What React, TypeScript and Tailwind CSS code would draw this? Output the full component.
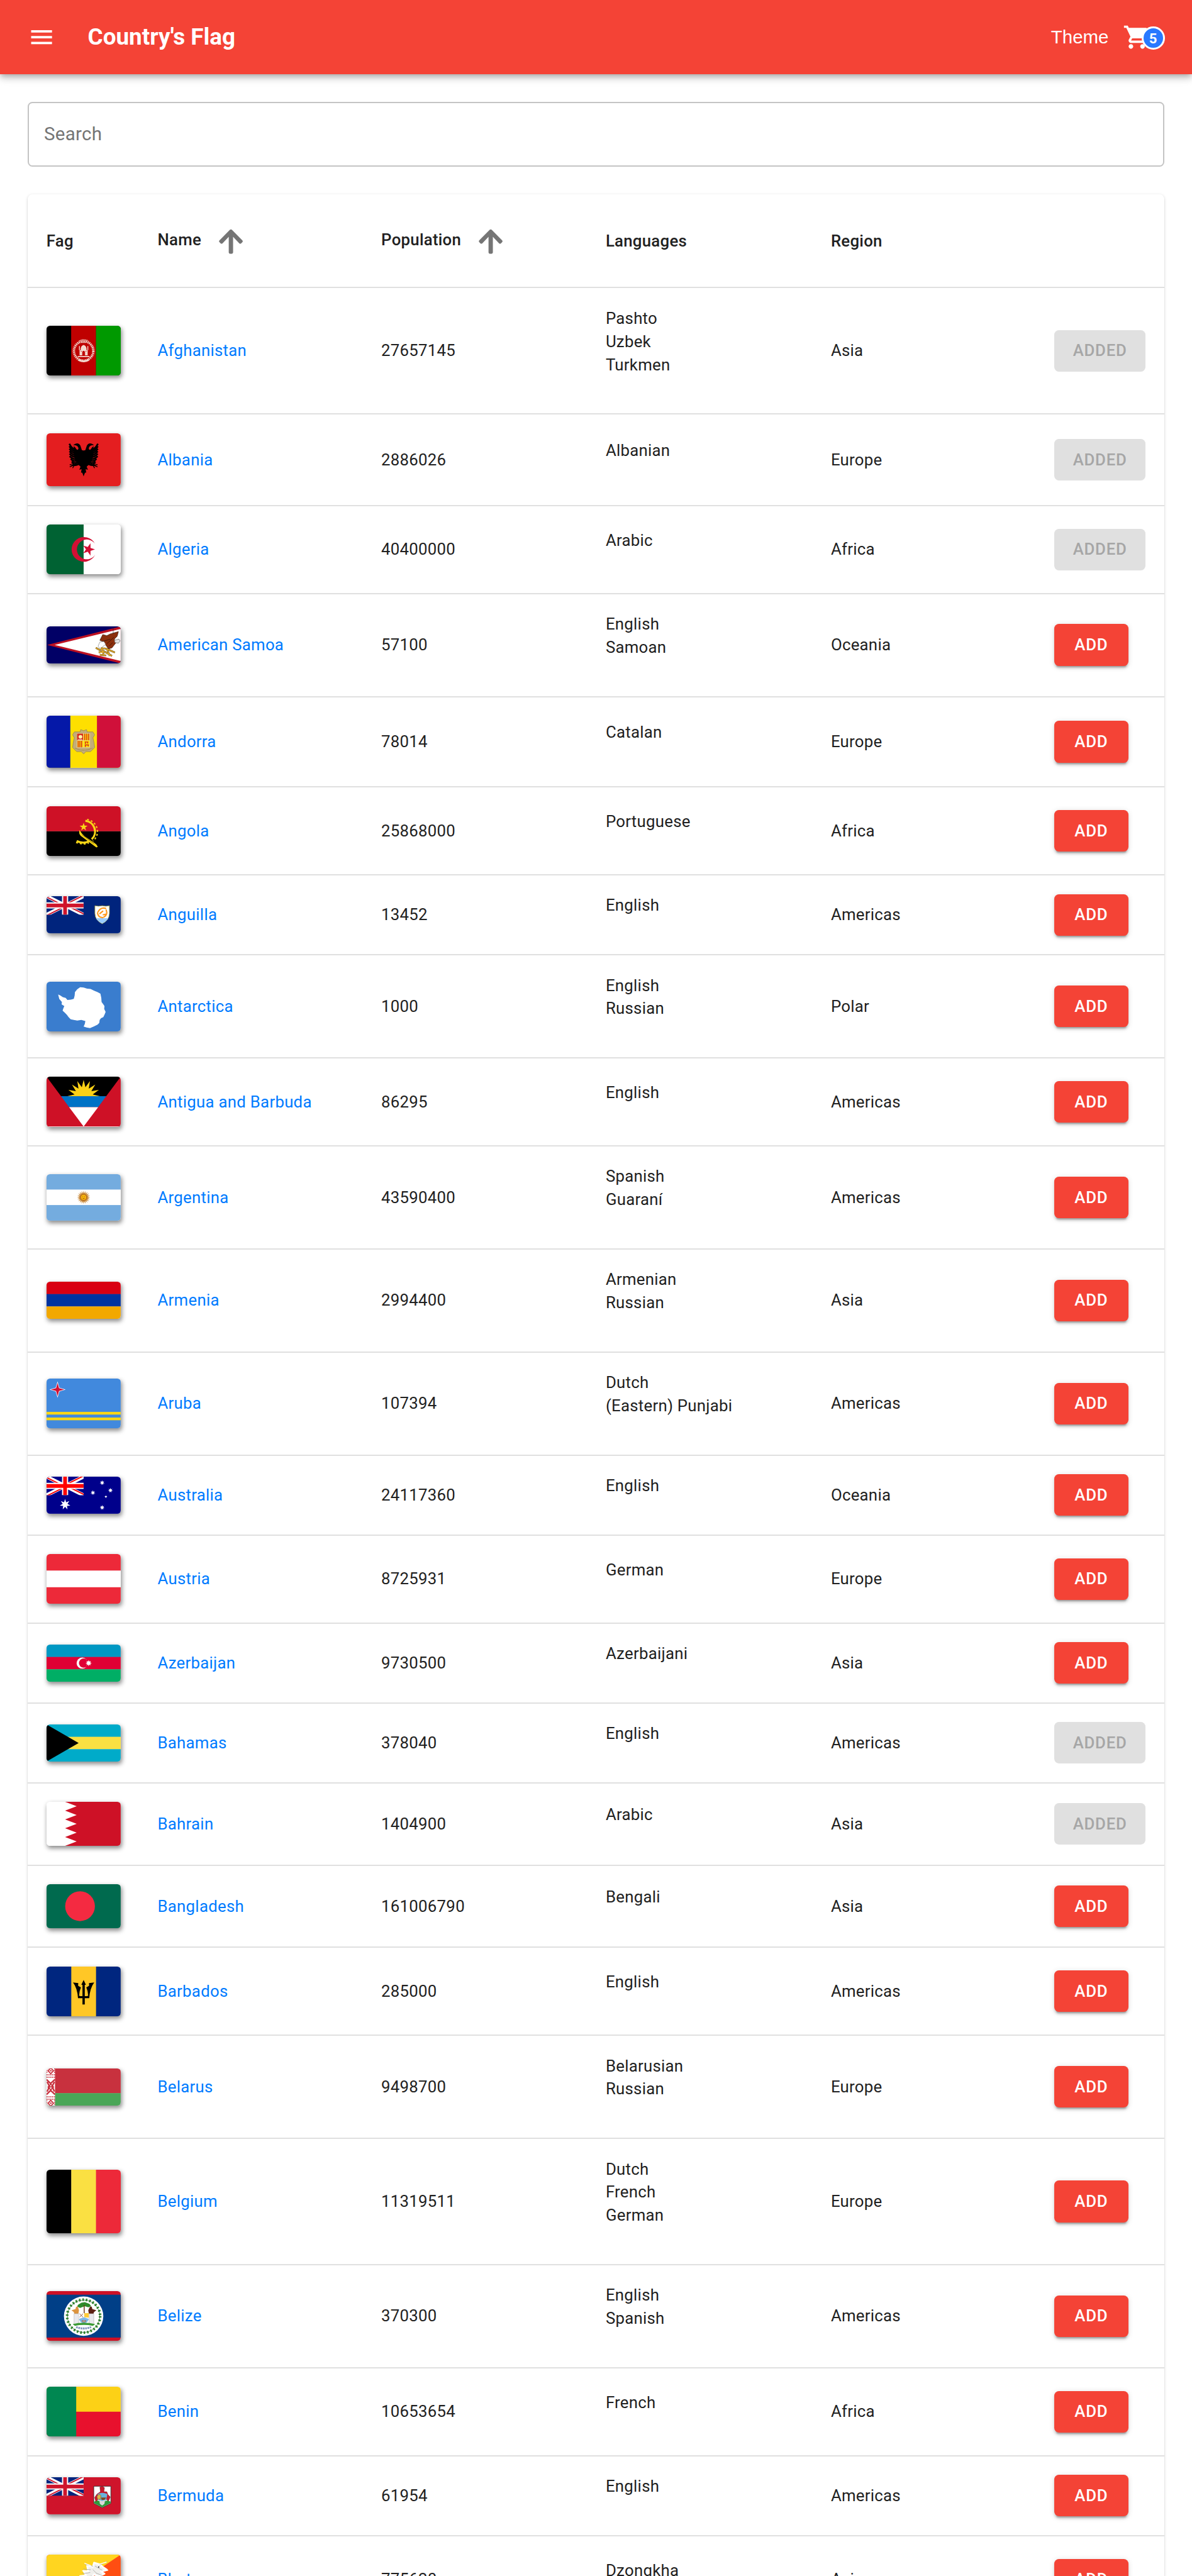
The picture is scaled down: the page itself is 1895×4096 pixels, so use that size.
import type { ReactNode } from "react";
import { FaArrowUp } from "react-icons/fa";
import { MdMenu, MdShoppingCart } from "react-icons/md";

/** Points of a regular star, first tip at `rot` degrees (0 = right, -90 = up). */
function star(cx: number, cy: number, n: number, outer: number, inner: number, rot = -90): string {
  return Array.from({ length: n * 2 }, (_, i) => {
    const r = i % 2 === 0 ? outer : inner;
    const a = ((rot + (i * 180) / n) * Math.PI) / 180;
    return `${(cx + r * Math.cos(a)).toFixed(2)},${(cy + r * Math.sin(a)).toFixed(2)}`;
  }).join(" ");
}

function Horizontal({ h, colors }: { h: number; colors: string[] }) {
  return (
    <>
      {colors.map((c, i) => (
        <rect key={i} y={(h / colors.length) * i} width="128" height={h / colors.length + 0.3} fill={c} />
      ))}
    </>
  );
}

function UnionJack({ red, blue }: { red: string; blue: string }) {
  return (
    <svg width="64" height="32" viewBox="0 0 64 32">
      <rect width="64" height="32" fill={blue} />
      <path d="M0 0L64 32M64 0L0 32" stroke="#fff" strokeWidth="6.4" />
      <path d="M-1 .9L30 16.4M65 31.1L34 15.6M63.5 -1.2L32 14.6M.5 33.2L32 17.4" stroke={red} strokeWidth="2.1" />
      <path d="M32 0V32M0 16H64" stroke="#fff" strokeWidth="10.6" />
      <path d="M32 0V32M0 16H64" stroke={red} strokeWidth="6.4" />
    </svg>
  );
}

const EAGLE_WING = (
  <g>
    <path d="M64.200 30L61 29L58.500 21.500C57 17.500 53 16.500 50 18L46 20L51 21C54 22 55.500 25 55 27C54 29.500 51.500 28.500 50 25L47 22L47 36L49 46L53 52L58 57L64.200 61Z" />
    {[0, 1, 2, 3, 4, 5, 6, 7, 8].map((i) => (
      <path
        key={i}
        d={`M${51 + i * 0.6} ${29 + i * 3}Q${44 + i * 0.4} ${27 + i * 3.8} ${39.3 + i * 0.1 + Math.max(0, i - 5) * 2} ${18 + i * 4.3}`}
        fill="none"
        stroke="#000"
        strokeWidth="2.900"
      />
    ))}
    <path d="M54 51L47 55L40 54M47 55L40 58M48 55L45 60M48 54L43 51" fill="none" stroke="#000" strokeWidth="1.500" />
    <path d="M64.200 52L59 57L56.500 63L60.500 62L59.500 68L61.500 68L64.200 74.500Z" />
  </g>
);

type Art = { h: number; art: ReactNode };

const FLAGS: Record<string, Art> = {
  Afghanistan: {
    h: 86,
    art: (
      <>
        <rect width="128" height="86" fill="#000" />
        <rect x="42.500" width="43" height="86" fill="#bf0000" />
        <rect x="85.300" width="43" height="86" fill="#009900" />
        <g fill="none" stroke="#f3d9cf">
          <circle cx="64" cy="43.500" r="16.500" strokeWidth="3.600" strokeDasharray="2 1" />
          <circle cx="64" cy="43.500" r="18.800" strokeWidth="0.800" strokeDasharray="1.500 1.500" />
          <path d="M55 59Q64 64 73 59" strokeWidth="3" />
          <path d="M56 26Q64 22 72 26M60 29H68" strokeWidth="1.200" strokeDasharray="2 .7" />
        </g>
        <g fill="#f3d9cf">
          <path d="M57 51V42H59V39Q60 34 64 33Q68 34 69 39V42H71V51Z" />
          <path d="M54 52H74V54H54ZM56 35H57.500V42H56ZM70.500 35H72V42H70.500Z" />
        </g>
        <path d="M62 51V45Q64 42 66 45V51ZM59 44H61M67 44H69" fill="#bf0000" stroke="#bf0000" strokeWidth=".8" />
      </>
    ),
  },
  Albania: {
    h: 91.4,
    art: (
      <>
        <rect width="128" height="92" fill="#e41e20" />
        {EAGLE_WING}
        <g transform="translate(128 0) scale(-1 1)">{EAGLE_WING}</g>
      </>
    ),
  },
  Algeria: {
    h: 86,
    art: (
      <>
        <rect width="128" height="86" fill="#fff" />
        <rect width="64" height="86" fill="#006233" />
        <path d="M84 34A21.400 21.400 0 1 0 84 52A17.100 17.100 0 1 1 84 34Z" fill="#d21034" />
        <polygon points={star(72.4, 43, 5, 11.2, 4.3, 0)} fill="#d21034" />
      </>
    ),
  },
  "American Samoa": {
    h: 64,
    art: (
      <>
        <rect width="128" height="64" fill="#010066" />
        <path d="M1 32L124 1L128 0V64L124 63Z" fill="#bd1021" />
        <path d="M14 32L128 4.300V59.700Z" fill="#fff" />
        <path d="M92 24L97 14L104 16L110 13L124 9L122 17L117 22L120 28L113 37L107 39L102 32L97 26Z" fill="#8b2f0c" stroke="#2e1206" strokeWidth=".7" />
        <path d="M97 26L110 22M104 30L116 19M108 34L114 28" stroke="#2e1206" strokeWidth=".8" fill="none" />
        <path d="M117 24L125 22L127 25L124 29L118 28Z" fill="#e4e4e4" stroke="#555" strokeWidth=".7" />
        <path d="M89 34L92 27L99 26L102 31L97 35L93 40Z" fill="#fff" stroke="#777" strokeWidth=".7" />
        <path d="M85 37L92 41L99 38L104 39L118 45M90 45L99 43L113 51M95 36L99 50M104 38L109 51M92 49L103 50" fill="none" stroke="#5b4310" strokeWidth="3" />
        <path d="M85 37L92 41L99 38L104 39L118 45M90 45L99 43L113 51M95 36L99 50M104 38L109 51M92 49L103 50" fill="none" stroke="#e0aa2c" strokeWidth="1.800" />
        <path d="M115 3V13" stroke="#222" strokeWidth=".6" />
      </>
    ),
  },
  Andorra: {
    h: 90,
    art: (
      <>
        <rect width="128" height="90" fill="#fedf00" />
        <rect width="41" height="90" fill="#0518a8" />
        <rect x="87" width="41" height="90" fill="#d0103a" />
        <path d="M59 24L64 26L69 24L70 28H80L83 33L80 38L82 47L83 55L76 62L68 62L64 66L60 62L52 62L45 55L46 47L48 38L45 33L48 28H58Z" fill="#c3ad78" stroke="#8f7d4c" strokeWidth=".8" />
        <path d="M49 56Q64 63 79 56" fill="none" stroke="#7c6a3c" strokeWidth="1" strokeDasharray="1.500 1" />
        <rect x="52.700" y="31" width="22" height="23.500" fill="#fedf00" stroke="#f3e6b8" strokeWidth=".6" />
        <rect x="52.700" y="31" width="10.700" height="11.500" fill="#d52b1e" />
        <circle cx="58.500" cy="36.500" r="3.200" fill="#fff3a8" />
        <path d="M54 41.500H62" stroke="#fff" strokeWidth="1.200" />
        <path d="M66 31V42.500M69.400 31V42.500M72.800 31V42.500M54.500 43.500V54.500M57.500 43.500V54.500M60.500 43.500V54.500" stroke="#d52b1e" strokeWidth="1.600" />
        <path d="M66 45.500H72M67 45V49M71 45V48M66 50.500H73M67 51V54M72 51V53" stroke="#d52b1e" strokeWidth="1.500" />
        <path d="M52.700 42.800H74.700M63.700 31V54.500" stroke="#e9dca8" strokeWidth=".7" />
      </>
    ),
  },
  Angola: {
    h: 86,
    art: (
      <>
        <rect width="128" height="43.300" fill="#ce1126" />
        <rect y="43.300" width="128" height="43" fill="#000" />
        <g fill="none" stroke="#f9d616">
          <path d="M67 25.200A18.500 18.500 0 0 1 78 57M52 60Q62 65 73 61" strokeWidth="3.600" />
          <path d="M70 22.800A21 21 0 0 1 80 60M51 62.500Q62 67 73 63.500" strokeWidth="2.200" strokeDasharray="3.200 3.600" />
        </g>
        <path d="M57 41Q55 47 59 51L86 71L88.500 70Q87 66 83 63.500L66 52Q60 47 57 41Z" fill="#f9d616" />
        <path d="M61 49L82 65" stroke="#6b5900" strokeWidth=".8" />
        <polygon points={star(64, 35.8, 5, 7.3, 2.8)} fill="#f9d616" />
      </>
    ),
  },
  Anguilla: {
    h: 64,
    art: (
      <>
        <rect width="128" height="64" fill="#00247d" />
        <UnionJack red="#cf142b" blue="#00247d" />
        <path d="M83.500 16.500Q90 18 96 16.500Q102 18 108.500 16.500V30Q108 42 96 47.500Q84 42 83.500 30Z" fill="#fff" stroke="#a5a13a" strokeWidth=".9" />
        <path d="M85.500 38H106.500Q103 44 96 47Q89 44 85.500 38Z" fill="#9cf" />
        <path d="M89 27Q93 19 102 21M103 24Q106 32 99 36M97 37Q89 37 88 29M92 30L97 26M98 32L103 31" fill="none" stroke="#ff9a1f" strokeWidth="2.400" strokeLinecap="round" />
      </>
    ),
  },
  Antarctica: {
    h: 86,
    art: (
      <>
        <rect width="128" height="86" fill="#3a7dce" />
        <path d="M20 22L24 24L28 26.500L33 28L36 31.500L42 31L47 29.500L48.500 24L49 18L53 13L58 9.500L64 10L70 12L76 12.500L82 15.500L88 18L93 20.500L94.500 28L95 35L98 39L100 42L99.500 47L102 52L100 57L98 61L94 63L91.700 66L91 71L88 74L82 77L75 80L69 79L64 77.500L66 73L67 68L60 66L53 67L47 66L41.700 65L38 61L35 57L31 53L27.700 50L29 46L30.700 42L26 39L26.500 35L22 30Z" fill="#fff" />
      </>
    ),
  },
  "Antigua and Barbuda": {
    h: 86,
    art: (
      <>
        <rect width="128" height="86" fill="#ce1126" />
        <path d="M0 0H128L103 33.800H25Z" fill="#000" />
        <clipPath id="sunHorizon">
          <rect width="128" height="33.800" />
        </clipPath>
        <polygon points={star(64, 33.8, 16, 28.5, 16)} fill="#fcd116" clipPath="url(#sunHorizon)" />
        <path d="M25 33.800H103L89 52.700H39Z" fill="#0072c6" />
        <path d="M39 52.700H89L64 86Z" fill="#fff" />
      </>
    ),
  },
  Argentina: {
    h: 80,
    art: (
      <>
        <Horizontal h={80} colors={["#74acdf", "#fff", "#74acdf"]} />
        <polygon points={star(64, 40, 20, 11.5, 7)} fill="#c98a3c" />
        <circle cx="64" cy="40" r="5.200" fill="#f6b40e" stroke="#9a4c10" strokeWidth=".8" />
        <path d="M62 39H63M65 39H66M62.500 42H65.500" stroke="#85340a" strokeWidth=".8" />
      </>
    ),
  },
  Armenia: { h: 64, art: <Horizontal h={64} colors={["#d90012", "#0033a0", "#f2a800"]} /> },
  Aruba: {
    h: 86,
    art: (
      <>
        <rect width="128" height="86" fill="#4189dd" />
        <rect y="57.500" width="128" height="4.700" fill="#f9d616" />
        <rect y="67.300" width="128" height="4.700" fill="#f9d616" />
        <polygon points={star(19, 19, 4, 14, 4.6)} fill="#fff" />
        <polygon points={star(19, 19, 4, 11.5, 3.6)} fill="#d21034" />
      </>
    ),
  },
  Australia: {
    h: 64,
    art: (
      <>
        <rect width="128" height="64" fill="#00008b" />
        <UnionJack red="#f00" blue="#00008b" />
        <g fill="#fff">
          <polygon points={star(32, 48, 7, 9.4, 4.2)} />
          <polygon points={star(96, 10.5, 7, 4.3, 1.9)} />
          <polygon points={star(110.3, 23.6, 7, 4.3, 1.9)} />
          <polygon points={star(80, 27.7, 7, 4.3, 1.9)} />
          <polygon points={star(96, 53.3, 7, 4.3, 1.9)} />
          <polygon points={star(102.4, 34.6, 5, 2.6, 1.1)} />
        </g>
      </>
    ),
  },
  Austria: { h: 86, art: <Horizontal h={86} colors={["#ed2939", "#fff", "#ed2939"]} /> },
  Azerbaijan: {
    h: 64,
    art: (
      <>
        <Horizontal h={64} colors={["#0098c3", "#e00034", "#00ae65"]} />
        <circle cx="61.500" cy="32" r="9.600" fill="#fff" />
        <circle cx="64" cy="32" r="8" fill="#e00034" />
        <polygon points={star(72.7, 32, 8, 5.4, 2.8)} fill="#fff" />
      </>
    ),
  },
  Bahamas: {
    h: 64,
    art: (
      <>
        <Horizontal h={64} colors={["#00abc9", "#fae042", "#00abc9"]} />
        <path d="M0 0L55.400 32L0 64Z" fill="#000" />
      </>
    ),
  },
  Bahrain: {
    h: 76,
    art: (
      <>
        <rect width="128" height="76" fill="#fff" />
        <path d="M128 0H32L52 7.600L32 15.200L52 22.800L32 30.400L52 38L32 45.600L52 53.200L32 60.800L52 68.400L32 76H128Z" fill="#ce1126" />
      </>
    ),
  },
  Bangladesh: {
    h: 76,
    art: (
      <>
        <rect width="128" height="76" fill="#006a4e" />
        <circle cx="57.800" cy="38" r="25.700" fill="#f42a41" />
      </>
    ),
  },
  Barbados: {
    h: 86,
    art: (
      <>
        <rect width="128" height="86" fill="#00267f" />
        <rect x="42.700" width="42.700" height="86" fill="#ffc726" />
        <path
          d="M64 23L60 31.500H62V51H57.500Q58.500 41 61 35L54.500 33L54.800 28.500L45.700 27.500Q53 37 54.300 54.500H62V65.500H66V54.500H73.700Q75 37 82.300 27.500L73.200 28.500L73.500 33L67 35Q69.500 41 70.500 51H66V31.500H68Z"
          fill="#000"
        />
        <path d="M55.500 32.500L60.500 35.500Q57.500 42 57 50.500M72.500 32.500L67.500 35.500Q70.500 42 71 50.500" fill="none" stroke="#ffc726" strokeWidth="1.800" />
      </>
    ),
  },
  Belarus: {
    h: 64,
    art: (
      <>
        <rect width="128" height="43" fill="#c8313e" />
        <rect y="42.600" width="128" height="22" fill="#4aa657" />
        <rect width="14.600" height="64" fill="#fff" />
        <g fill="none" stroke="#c8313e" strokeWidth="1.900">
          {[4, 32, 60].map((y) => (
            <path key={y} d={`M7.300 ${y - 5}L12 ${y}L7.300 ${y + 5}L2.600 ${y}ZM5.500 ${y}H9`} />
          ))}
          <path d="M0 19L7 26L14.600 19M0 45L7 38L14.600 45M1 23L5 31L1 40M13.600 23L9.600 31L13.600 40" strokeWidth="2.600" />
          <path d="M0 11H14.600M0 15H14.600M0 49H14.600M0 53H14.600" strokeDasharray="2 1.200" />
          <path d="M.5 0V9M14 0V9M.5 55V64M14 55V64" strokeDasharray="1.500 1.500" />
        </g>
      </>
    ),
  },
  Belgium: {
    h: 110,
    art: (
      <>
        <rect width="43" height="110" fill="#000" />
        <rect x="42.700" width="43" height="110" fill="#fae042" />
        <rect x="85.300" width="43" height="110" fill="#ed2939" />
      </>
    ),
  },
  Belize: {
    h: 86,
    art: (
      <>
        <rect width="128" height="86" fill="#ce1126" />
        <rect y="6.200" width="128" height="74" fill="#003f87" />
        <circle cx="64" cy="43.300" r="34" fill="#fff" />
        <circle cx="64" cy="43.300" r="28.500" fill="none" stroke="#2f8a2c" strokeWidth="4.600" strokeDasharray="2.600 3.370" />
        <circle cx="64" cy="43.300" r="28" fill="none" stroke="#1d5c1f" strokeWidth=".8" />
        <path d="M54 24L60 20L66 19L74 22L77 26L72 28L66 26L58 29L53 27Z" fill="#2e8b2a" />
        <path d="M65 24V38" stroke="#6b3a12" strokeWidth="1.600" />
        <path d="M43 33L50 31L51 27H54L56 33L55 39H48L47 36Z" fill="#dc9440" />
        <path d="M86 33L79 31L78 27H75L72 33L73 39H81L82 36Z" fill="#5c2014" />
        <path d="M47.500 39H55.500V57H47.500ZM73.500 39H81.500V57H73.500Z" fill="#e9e9ee" stroke="#aaa" strokeWidth=".6" />
        <path d="M56 38H73V47Q71 54 64.500 56Q58 54 56 47Z" fill="#fff" />
        <path d="M65 38H73V46L65 45Z" fill="#ffcb3b" />
        <path d="M56 48L64.500 45L73 48Q71 55 64.500 56Q58 55 56 48Z" fill="#7fb8e8" />
        <path d="M57 45L63 39M57 39L63 45M61 51H68L67 53H62Z" stroke="#8a4a2a" strokeWidth="1" fill="#fff" />
        <path d="M45 57Q64 52 84 57L80 60Q64 57 49 60Z" fill="#3b9b35" />
        <path d="M51 62Q64 67 77 62" fill="none" stroke="#8195bd" strokeWidth="3.400" strokeDasharray="3 1" />
      </>
    ),
  },
  Benin: {
    h: 86,
    art: (
      <>
        <rect width="128" height="43.500" fill="#fcd116" />
        <rect y="43.200" width="128" height="43" fill="#e8112d" />
        <rect width="51.200" height="86" fill="#008751" />
      </>
    ),
  },
  Bermuda: {
    h: 64,
    art: (
      <>
        <rect width="128" height="64" fill="#cf142b" />
        <UnionJack red="#cf142b" blue="#00247d" />
        <path d="M81.500 15.500H111V45L96 52.500L81.500 45Z" fill="#fff" stroke="#222" strokeWidth=".9" />
        <path d="M82 42L88 40L96 43L105 40L110.500 42V44.600L96 52L82 44.600Z" fill="#2f9a3a" />
        <path d="M92 17L96 15.500L100 18L99 25H104L106 30L110 34L107 41L103 38H89L85 42L83 35L87 29L93 25Z" fill="#c9182b" stroke="#5c0a12" strokeWidth=".5" />
        <path d="M88 29Q96 25 105 29L103 39Q96 47 90 39Z" fill="#69b3dc" />
        <path d="M87 33Q91 27 94 32L93 38H88Z" fill="#d7b84a" stroke="#6d5915" strokeWidth=".6" />
        <path d="M94 35H103L100 39H95Z" fill="#7b4a22" />
        <path d="M91 39L96 41L101 39L100 46L96 49L92 46Z" fill="#d9d9d9" />
      </>
    ),
  },
  Bhutan: {
    h: 86,
    art: (
      <>
        <rect width="128" height="86" fill="#ff4e12" />
        <path d="M0 0H128L0 86Z" fill="#ffd520" />
        <g fill="none" strokeLinecap="round" strokeLinejoin="round">
          <path d="M54 48L60 42L58 37L68 36L64 28L72 29L70 19L80 21L82 14L92 17L98 22L104 26L94 29L100 33L90 38L82 34L76 42L66 50" fill="#f1f0ec" stroke="#fff" strokeWidth="3" />
          <path d="M67 17L80 20M64 25L76 26M62 33L75 31M60 39L78 37M92 18L104 12M84 20L96 27M86 32L96 36M80 26L86 32" stroke="#a9a8a4" strokeWidth=".9" />
          <path d="M90 17L103 13M66 15L76 19M62 28L70 30M94 30L106 27" stroke="#fff" strokeWidth="1.500" />
        </g>
        <circle cx="90" cy="21.500" r="1.100" fill="#222" />
      </>
    ),
  },
};

type Country = {
  name: string;
  population: string;
  languages: string[];
  region: string;
  added?: boolean;
  /** Row height in layout units. */
  h: number;
};

const COUNTRIES: Country[] = [
  { name: "Afghanistan", population: "27657145", languages: ["Pashto", "Uzbek", "Turkmen"], region: "Asia", added: true, h: 109 },
  { name: "Albania", population: "2886026", languages: ["Albanian"], region: "Europe", added: true, h: 79 },
  { name: "Algeria", population: "40400000", languages: ["Arabic"], region: "Africa", added: true, h: 76 },
  { name: "American Samoa", population: "57100", languages: ["English", "Samoan"], region: "Oceania", h: 89 },
  { name: "Andorra", population: "78014", languages: ["Catalan"], region: "Europe", h: 78 },
  { name: "Angola", population: "25868000", languages: ["Portuguese"], region: "Africa", h: 76 },
  { name: "Anguilla", population: "13452", languages: ["English"], region: "Americas", h: 69 },
  { name: "Antarctica", population: "1000", languages: ["English", "Russian"], region: "Polar", h: 89 },
  { name: "Antigua and Barbuda", population: "86295", languages: ["English"], region: "Americas", h: 76 },
  { name: "Argentina", population: "43590400", languages: ["Spanish", "Guaraní"], region: "Americas", h: 89 },
  { name: "Armenia", population: "2994400", languages: ["Armenian", "Russian"], region: "Asia", h: 89 },
  { name: "Aruba", population: "107394", languages: ["Dutch", "(Eastern) Punjabi"], region: "Americas", h: 89 },
  { name: "Australia", population: "24117360", languages: ["English"], region: "Oceania", h: 69 },
  { name: "Austria", population: "8725931", languages: ["German"], region: "Europe", h: 76 },
  { name: "Azerbaijan", population: "9730500", languages: ["Azerbaijani"], region: "Asia", h: 69 },
  { name: "Bahamas", population: "378040", languages: ["English"], region: "Americas", added: true, h: 69 },
  { name: "Bahrain", population: "1404900", languages: ["Arabic"], region: "Asia", added: true, h: 71 },
  { name: "Bangladesh", population: "161006790", languages: ["Bengali"], region: "Asia", h: 71 },
  { name: "Barbados", population: "285000", languages: ["English"], region: "Americas", h: 76 },
  { name: "Belarus", population: "9498700", languages: ["Belarusian", "Russian"], region: "Europe", h: 89 },
  { name: "Belgium", population: "11319511", languages: ["Dutch", "French", "German"], region: "Europe", h: 109 },
  { name: "Belize", population: "370300", languages: ["English", "Spanish"], region: "Americas", h: 89 },
  { name: "Benin", population: "10653654", languages: ["French"], region: "Africa", h: 76 },
  { name: "Bermuda", population: "61954", languages: ["English"], region: "Americas", h: 69 },
  { name: "Bhutan", population: "775620", languages: ["Dzongkha"], region: "Asia", h: 76 },
];

const UNIT = 1.8416;

function Flag({ name }: { name: string }) {
  const { h, art } = FLAGS[name];
  return (
    <div className="w-[117.9px] overflow-hidden rounded-[5.500px] shadow-[1.800px_3.700px_7.4px_rgba(0,0,0,0.45)]">
      <svg className="block w-full" viewBox={`0 0 128 ${h}`} style={{ height: (h * UNIT) / 2 }} preserveAspectRatio="none">
        {art}
      </svg>
    </div>
  );
}

function CartButton({ added }: { added?: boolean }) {
  return added ? (
    <button className="h-[66.3px] w-[145.5px] rounded-[7.4px] bg-[#e0e0e0] text-[25.78px] font-medium tracking-[0.02857em] text-[#a6a6a6]">
      ADDED
    </button>
  ) : (
    <button className="h-[66.3px] w-[117.9px] rounded-[7.4px] bg-[#f44336] text-[25.78px] font-medium tracking-[0.02857em] text-white shadow-[0_5.5px_1.800px_-3.700px_rgba(0,0,0,0.2),0_3.700px_3.700px_0_rgba(0,0,0,0.14),0_1.800px_9.200px_0_rgba(0,0,0,0.12)]">
      ADD
    </button>
  );
}

function SortableHeading({ label }: { label: string }) {
  return (
    <div className="flex items-center gap-[24.6px]">
      <span className="relative -top-[2px]">{label}</span>
      <FaArrowUp className="size-[44.2px] text-[#757575]" />
    </div>
  );
}

export default function App() {
  return (
    <div className="h-[4096px] w-[1895px] overflow-hidden bg-white font-['Roboto',sans-serif] text-[#212121]">
      <header className="relative flex h-[118px] items-center bg-[#f44336] pl-[44.2px] pr-[66.3px] text-white shadow-[0_3.700px_7.4px_-1.800px_rgba(0,0,0,0.2),0_7.4px_9.200px_0_rgba(0,0,0,0.14),0_1.800px_18.400px_0_rgba(0,0,0,0.12)]">
        <MdMenu className="size-[44.2px]" />
        <h1 className="ml-[51.2px] text-[36.83px] font-bold">Country's Flag</h1>
        <span className="ml-auto font-['Liberation_Sans',Arial,sans-serif] text-[29.47px]">Theme</span>
        <div className="relative ml-[22px]">
          <MdShoppingCart className="size-[44.2px]" />
          <span className="absolute left-[30.3px] top-[5.500px] flex size-[36.8px] items-center justify-center rounded-full border-[3.700px] border-white bg-[#2979ff] text-[22.1px] font-bold leading-none">
            5
          </span>
        </div>
      </header>

      <main className="px-[44.2px] pt-[44px]">
        <div className="flex h-[103.1px] items-center rounded-[7.4px] border-2 border-[#c4c4c4] px-[23.8px] text-[29.47px] tracking-[0.00938em] text-[#757575]">
          Search
        </div>

        <div className="mt-[44.2px] rounded-[7.4px] bg-white text-[25.78px] leading-[36.83px] tracking-[0.01071em] shadow-[0_3.700px_1.800px_-1.800px_rgba(0,0,0,0.2),0_1.800px_1.800px_0_rgba(0,0,0,0.14),0_1.800px_5.500px_0_rgba(0,0,0,0.12)]">
          <div className="grid h-[149.2px] grid-cols-[176.8px_355.6px_356.8px_358px_355px_1fr] items-center border-b-2 border-[#e0e0e0] pt-[1.5px] font-medium *:pl-[29.5px]">
            <div>Fag</div>
            <SortableHeading label="Name" />
            <SortableHeading label="Population" />
            <div>Languages</div>
            <div>Region</div>
          </div>
          {COUNTRIES.map((c) => (
            <div
              key={c.name}
              className="grid grid-cols-[176.8px_355.6px_356.8px_358px_355px_1fr] items-center border-b-2 border-[#e0e0e0] *:pl-[29.5px]"
              style={{ height: c.h * UNIT }}
            >
              <div>
                <Flag name={c.name} />
              </div>
              <a className="text-[#007bff]">{c.name}</a>
              <div>{c.population}</div>
              <ul className="mb-[29.5px]">
                {c.languages.map((l) => (
                  <li key={l}>{l}</li>
                ))}
              </ul>
              <div>{c.region}</div>
              <div>
                <CartButton added={c.added} />
              </div>
            </div>
          ))}
        </div>
      </main>
    </div>
  );
}
